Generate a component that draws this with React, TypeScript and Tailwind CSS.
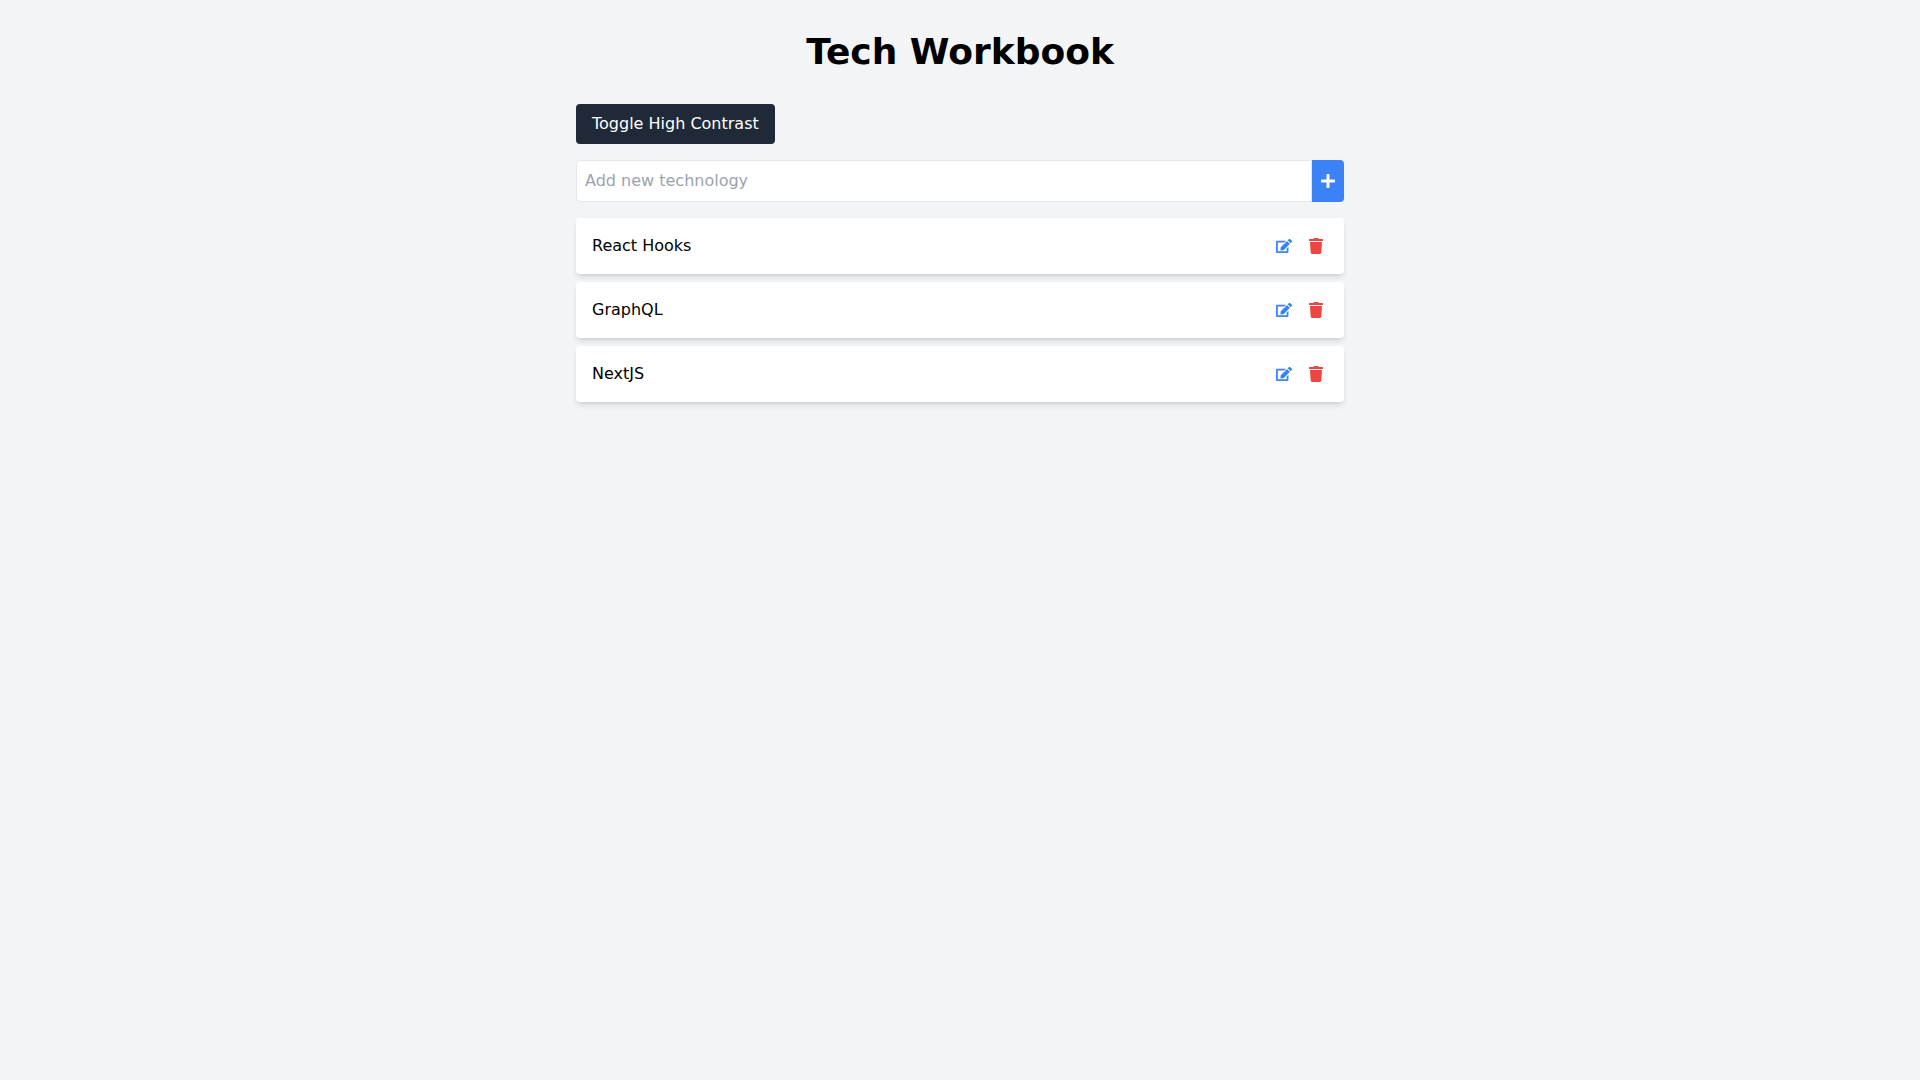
import { FaEdit, FaPlus, FaTrash } from 'react-icons/fa';

const technologies = ['React Hooks', 'GraphQL', 'NextJS'];

const TechRow = ({ name }: { name: string }) => (
  <li className="mb-2 flex items-center justify-between rounded bg-white p-4 shadow-md">
    <span>{name}</span>
    <div className="flex items-center gap-4 pr-1">
      <button type="button" className="text-[#3b82f6]">
        <FaEdit />
      </button>
      <button type="button" className="text-[#ef4444]">
        <FaTrash />
      </button>
    </div>
  </li>
);

export default function App() {
  return (
    <div className="min-h-screen bg-[#f3f4f6] p-8 font-['DejaVu_Sans',sans-serif] text-black">
      <h1 className="mb-8 text-center text-4xl font-bold">Tech Workbook</h1>
      <div className="mx-auto max-w-3xl">
        <button
          type="button"
          className="mb-4 rounded bg-[#1f2937] px-4 py-2 text-white"
        >
          Toggle High Contrast
        </button>
        <div className="mb-4 flex">
          <input
            type="text"
            placeholder="Add new technology"
            className="grow rounded-l border border-[#e5e7eb] bg-white p-2 outline-none placeholder:text-[#9ca3af]"
          />
          <button
            type="button"
            className="rounded-r bg-[#3b82f6] p-2 text-white"
          >
            <FaPlus />
          </button>
        </div>
        <ul>
          {technologies.map((name) => (
            <TechRow key={name} name={name} />
          ))}
        </ul>
      </div>
    </div>
  );
}
